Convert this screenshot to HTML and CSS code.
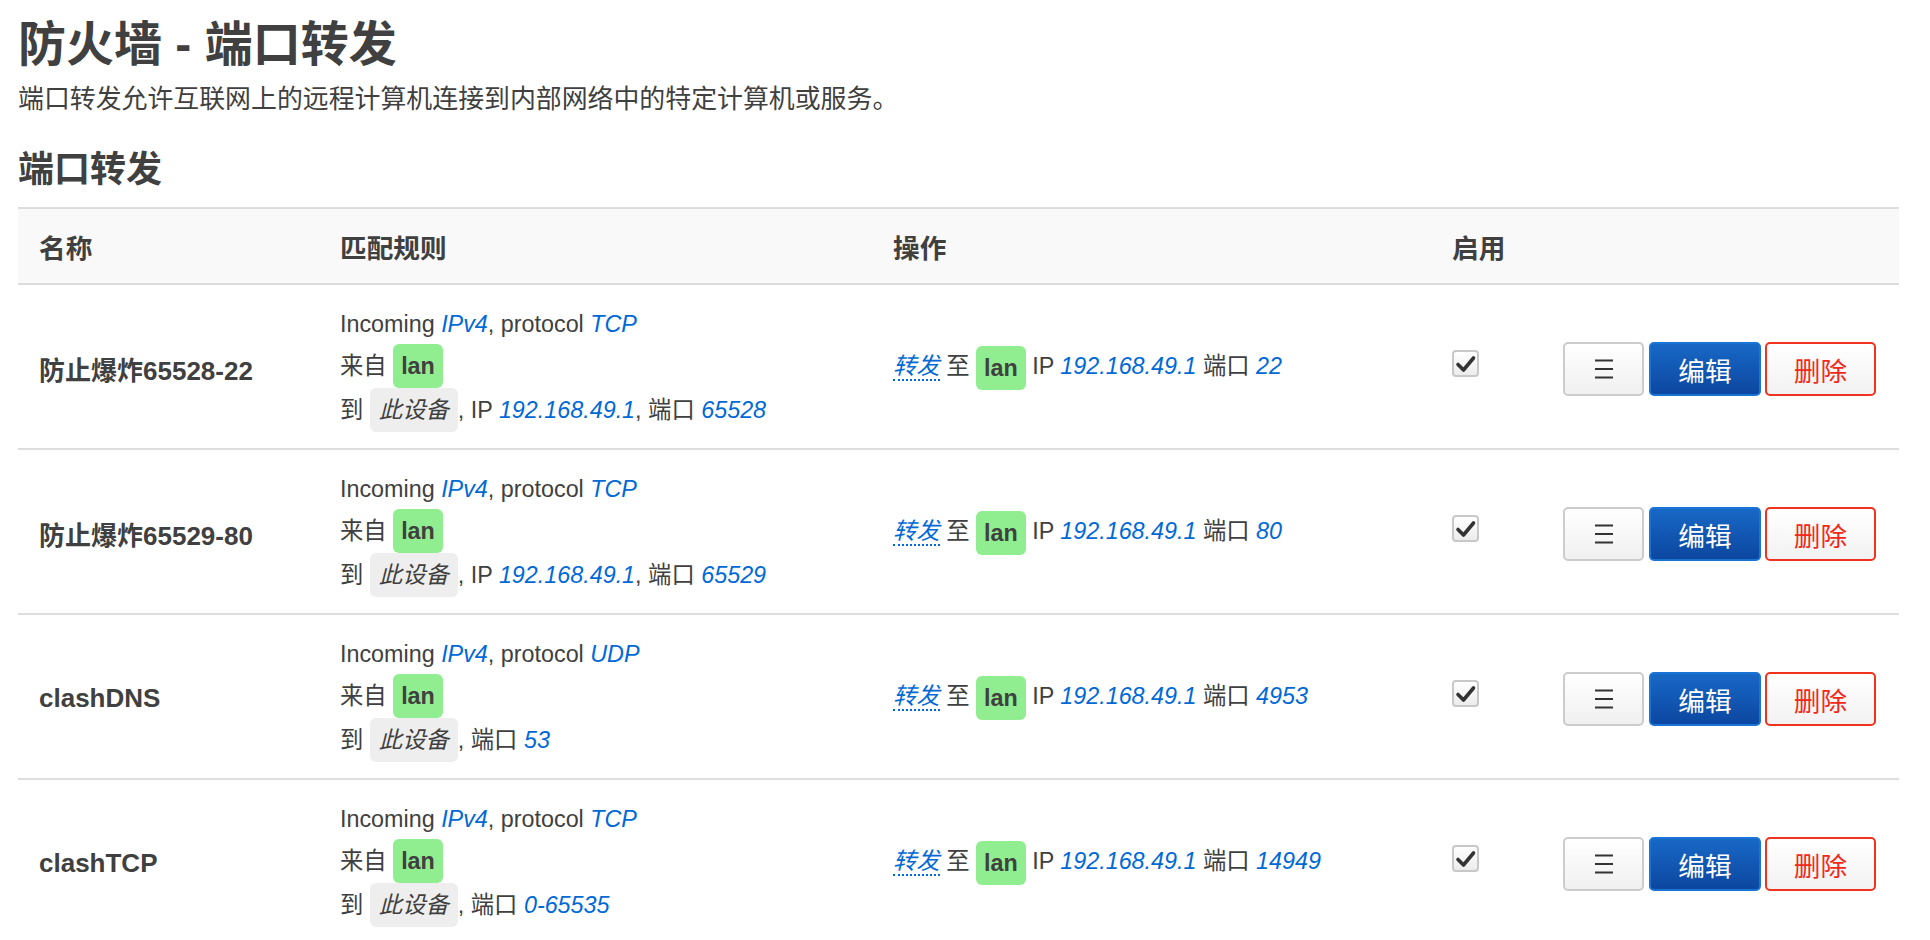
FILE: index.html
```html
<!DOCTYPE html>
<html lang="zh-CN">
<head>
<meta charset="utf-8">
<title>防火墙 - 端口转发</title>
<link rel="stylesheet" href="styles.css">
</head>
<body>
<div class="page">
  <h2 class="title">防火墙 - 端口转发</h2>
  <div class="desc">端口转发允许互联网上的远程计算机连接到内部网络中的特定计算机或服务。</div>
  <h3 class="section">端口转发</h3>
  <table class="grid">
    <colgroup>
      <col class="c-name"><col class="c-rule"><col class="c-act"><col class="c-en"><col class="c-btn">
    </colgroup>
    <thead>
      <tr><th>名称</th><th>匹配规则</th><th>操作</th><th>启用</th><th></th></tr>
    </thead>
    <tbody>
      <tr>
        <td class="name">防止爆炸65528-22</td>
        <td class="rule">
          <div class="ln l1">Incoming <var>IPv4</var>, protocol <var>TCP</var></div>
          <div class="ln">来自 <span class="zone">lan</span></div>
          <div class="ln">到 <span class="dev">此设备</span>, IP <var>192.168.49.1</var>, 端口 <var>65528</var></div>
        </td>
        <td class="act"><var class="fw">转发</var> 至 <span class="zone">lan</span> IP <var>192.168.49.1</var> 端口 <var>22</var></td>
        <td class="en"><span class="cb"><svg viewBox="0 0 23 23" width="23" height="23"><path d="M4 12.5 L9.5 18 L19.5 6" fill="none" stroke="#333" stroke-width="3.6" stroke-linecap="round" stroke-linejoin="round"/></svg></span></td>
        <td class="btns"><div class="bgrp"><button class="b b-menu"><svg viewBox="0 0 20 20" width="20" height="20"><path d="M1 1.5h18M1 10h18M1 18.5h18" stroke="#333" stroke-width="2"/></svg></button><button class="b b-edit">编辑</button><button class="b b-del">删除</button></div></td>
      </tr>
      <tr>
        <td class="name">防止爆炸65529-80</td>
        <td class="rule">
          <div class="ln l1">Incoming <var>IPv4</var>, protocol <var>TCP</var></div>
          <div class="ln">来自 <span class="zone">lan</span></div>
          <div class="ln">到 <span class="dev">此设备</span>, IP <var>192.168.49.1</var>, 端口 <var>65529</var></div>
        </td>
        <td class="act"><var class="fw">转发</var> 至 <span class="zone">lan</span> IP <var>192.168.49.1</var> 端口 <var>80</var></td>
        <td class="en"><span class="cb"><svg viewBox="0 0 23 23" width="23" height="23"><path d="M4 12.5 L9.5 18 L19.5 6" fill="none" stroke="#333" stroke-width="3.6" stroke-linecap="round" stroke-linejoin="round"/></svg></span></td>
        <td class="btns"><div class="bgrp"><button class="b b-menu"><svg viewBox="0 0 20 20" width="20" height="20"><path d="M1 1.5h18M1 10h18M1 18.5h18" stroke="#333" stroke-width="2"/></svg></button><button class="b b-edit">编辑</button><button class="b b-del">删除</button></div></td>
      </tr>
      <tr>
        <td class="name">clashDNS</td>
        <td class="rule">
          <div class="ln l1">Incoming <var>IPv4</var>, protocol <var>UDP</var></div>
          <div class="ln">来自 <span class="zone">lan</span></div>
          <div class="ln">到 <span class="dev">此设备</span>, 端口 <var>53</var></div>
        </td>
        <td class="act"><var class="fw">转发</var> 至 <span class="zone">lan</span> IP <var>192.168.49.1</var> 端口 <var>4953</var></td>
        <td class="en"><span class="cb"><svg viewBox="0 0 23 23" width="23" height="23"><path d="M4 12.5 L9.5 18 L19.5 6" fill="none" stroke="#333" stroke-width="3.6" stroke-linecap="round" stroke-linejoin="round"/></svg></span></td>
        <td class="btns"><div class="bgrp"><button class="b b-menu"><svg viewBox="0 0 20 20" width="20" height="20"><path d="M1 1.5h18M1 10h18M1 18.5h18" stroke="#333" stroke-width="2"/></svg></button><button class="b b-edit">编辑</button><button class="b b-del">删除</button></div></td>
      </tr>
      <tr>
        <td class="name">clashTCP</td>
        <td class="rule">
          <div class="ln l1">Incoming <var>IPv4</var>, protocol <var>TCP</var></div>
          <div class="ln">来自 <span class="zone">lan</span></div>
          <div class="ln">到 <span class="dev">此设备</span>, 端口 <var>0-65535</var></div>
        </td>
        <td class="act"><var class="fw">转发</var> 至 <span class="zone">lan</span> IP <var>192.168.49.1</var> 端口 <var>14949</var></td>
        <td class="en"><span class="cb"><svg viewBox="0 0 23 23" width="23" height="23"><path d="M4 12.5 L9.5 18 L19.5 6" fill="none" stroke="#333" stroke-width="3.6" stroke-linecap="round" stroke-linejoin="round"/></svg></span></td>
        <td class="btns"><div class="bgrp"><button class="b b-menu"><svg viewBox="0 0 20 20" width="20" height="20"><path d="M1 1.5h18M1 10h18M1 18.5h18" stroke="#333" stroke-width="2"/></svg></button><button class="b b-edit">编辑</button><button class="b b-del">删除</button></div></td>
      </tr>
    </tbody>
  </table>
</div>
</body>
</html>
```
FILE: styles.css
```css
html, body {
  margin: 0;
  padding: 0;
  background: #fff;
}
body {
  font-family: "Liberation Sans", "Noto Sans CJK SC", sans-serif;
  color: #404040;
  font-size: 26.67px;
}
.page {
  padding: 0 31px 0 18px;
}
.title {
  font-size: 48px;
  line-height: 56px;
  font-weight: bold;
  margin: 17px 0 0;
}
.desc {
  font-size: 25.9px;
  line-height: 36px;
  margin-top: 8px;
}
.section {
  font-size: 36px;
  line-height: 44px;
  font-weight: bold;
  margin: 31px 0 0;
}
.grid {
  margin-top: 15px;
  width: 100%;
  table-layout: fixed;
  border-collapse: separate;
  border-spacing: 0;
}
.c-name { width: 301px; }
.c-rule { width: 553px; }
.c-act { width: 559px; }
.c-en { width: 111px; }
.c-btn { width: 357px; }
.grid th {
  background: #f9f9f9;
  border-top: 2px solid #ddd;
  border-bottom: 2px solid #ddd;
  text-align: left;
  font-weight: bold;
  font-size: 26.67px;
  padding: 0 21px;
  box-sizing: border-box;
  vertical-align: middle;
}
.grid thead th { height: 78px; }
.grid td {
  border-bottom: 2px solid #ddd;
  padding: 19px 21px 16px;
  vertical-align: middle;
}
.name {
  font-weight: bold;
  font-size: 26px;
}
.rule, .act {
  font-size: 23.33px;
}
.ln {
  line-height: 40px;
  height: 44px;
  display: flex;
  align-items: center;
  white-space: pre;
}
.ln.l1 { height: 40px; }
var {
  font-style: italic;
  color: #0069d6;
}
.zone, .dev {
  display: inline-block;
  height: 44px;
  line-height: 44px;
  padding: 0 8px;
  border-radius: 6px;
  vertical-align: middle;
}
.zone {
  background: #90ee90;
  font-weight: bold;
}
.dev {
  background: #eee;
  font-style: italic;
  padding: 0 9px;
}
.act {
  white-space: nowrap;
}
.fw {
  border-bottom: 2px dotted #0069d6;
}
.grid td.en {
  padding-top: 14px;
  padding-bottom: 21px;
}
.cb {
  display: block;
  width: 27px;
  height: 27px;
  box-sizing: border-box;
  border: 2px solid #c8c8c8;
  border-radius: 4px;
  background: linear-gradient(#ffffff, #ececec);
}
.cb svg {
  display: block;
}
.grid td.btns {
  padding: 20px 23px 15px 21px;
}
.bgrp {
  display: flex;
  justify-content: flex-end;
  gap: 4px;
}
.b {
  height: 54px;
  box-sizing: border-box;
  border-radius: 5px;
  border: 2px solid #ccc;
  font-family: "Liberation Sans", "Noto Sans CJK SC", sans-serif;
  font-size: 26.67px;
  padding: 0;
  display: flex;
  align-items: center;
  justify-content: center;
  margin: 0;
}
.b-menu {
  width: 81px;
  background: linear-gradient(#ffffff, #f0f0f0);
  margin-right: 1px;
}
.b-edit {
  width: 112px;
  color: #fff;
  border-color: #1a74d6;
  background: linear-gradient(#1868c6, #0c47a0);
}
.b-del {
  width: 111px;
  color: #f3281a;
  border-color: #f0321f;
  background: linear-gradient(#ffffff, #f2f2f2);
}
```
